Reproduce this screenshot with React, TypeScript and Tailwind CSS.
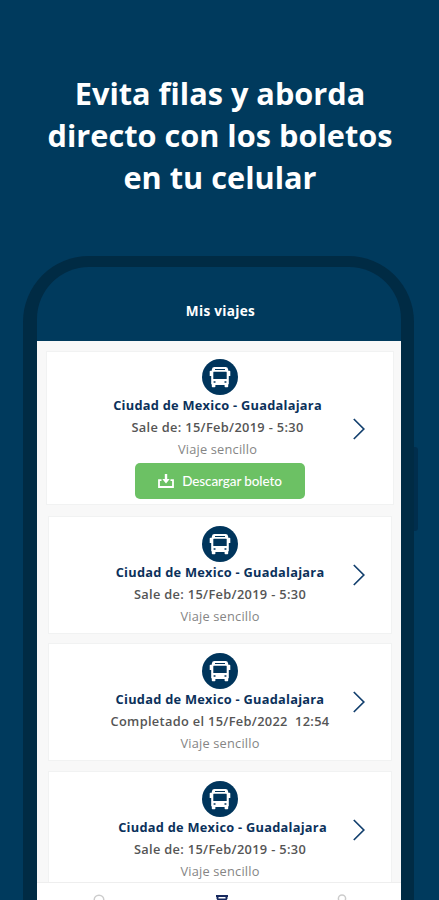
import clsx from 'clsx'

type Trip = {
  route: string
  date: string
  type: string
  download?: boolean
  textClass?: string
  routeClass?: string
}

const trips: Trip[] = [
  {
    route: 'Ciudad de Mexico - Guadalajara',
    date: 'Sale de: 15/Feb/2019 - 5:30',
    type: 'Viaje sencillo',
    download: true,
    textClass: 'pr-[5px]',
  },
  {
    route: 'Ciudad de Mexico - Guadalajara',
    date: 'Sale de: 15/Feb/2019 - 5:30',
    type: 'Viaje sencillo',
  },
  {
    route: 'Ciudad de Mexico - Guadalajara',
    date: 'Completado el 15/Feb/2022  12:54',
    type: 'Viaje sencillo',
  },
  {
    route: 'Ciudad de Mexico - Guadalajara',
    date: 'Sale de: 15/Feb/2019 - 5:30',
    type: 'Viaje sencillo',
    routeClass: 'pl-[5px]',
  },
]

function BusIcon() {
  return (
    <svg viewBox="0 0 36 36" className="block h-9 w-9 shrink-0">
      <circle cx="18" cy="18" r="18" fill="#00355c" />
      <path
        fill="#fff"
        fillRule="evenodd"
        d="M12.500 8h11q2.300 0 2.600 2.200l.2 1.500h1.200q.8 0 .8.800v4.500h-1.500v8.200h-.6v2.300q0 .8-.8.800h-2q-.8 0-.8-.8v-1.600h-9.200v1.600q0 .8-.8.800h-2q-.8 0-.8-.8v-2.300h-.6v-8.200H7.700v-4.500q0-.8.8-.8h1.200l.2-1.500q.3-2.200 2.600-2.200zM13 9.900v1h10v-1zM11.700 12.800q-.4 0-.4.400v6.900h13.400v-6.900q0-.4-.4-.4zM11.600 22.200v1.600h1.900v-1.600zM22.500 22.200v1.600h1.900v-1.600z"
      />
    </svg>
  )
}

function TripCard({ trip }: { trip: Trip }) {
  return (
    <div
      className={clsx(
        'grid shrink-0 grid-cols-[1fr_auto_1fr] items-center border border-[#f1f2f2] bg-white',
        trip.download ? 'mr-[7px] ml-[9px] h-[154px]' : 'mr-[9px] ml-[11px] h-[118px]'
      )}
    >
      <div />
      <div className={clsx('flex flex-col items-center self-start whitespace-pre', trip.download ? 'pt-[7px]' : 'pt-[9px]')}>
        <BusIcon />
        <div className={clsx('flex flex-col items-center', trip.textClass)}>
          <p className={clsx('text-[12.8px] leading-[20px] font-bold tracking-[0.26px] text-[#0b315b]', trip.routeClass)}>{trip.route}</p>
          <p className="text-[12.8px] leading-[24px] font-semibold tracking-[0.33px] text-[#555]">{trip.date}</p>
          <p className="text-[12.8px] leading-[21px] tracking-[0.2px] text-[#858585]">{trip.type}</p>
        </div>
        {trip.download && (
          <button className="mt-[3px] flex h-9 w-[170px] items-center justify-center gap-2 rounded-[5px] bg-[#6cc164] font-['Lato',sans-serif] text-[13.5px] font-medium tracking-[-0.1px] text-white">
            <svg viewBox="0 0 16 14" className="h-[14px] w-4" fill="none" stroke="#fff" strokeWidth="1.800">
              <path d="M3.500 6.200H1V13h14V6.200h-2.500" />
              <path d="M8 0v6" strokeWidth="2.400" />
              <path d="M4.300 5h7.400L8 9.600z" fill="#fff" stroke="none" />
            </svg>
            Descargar boleto
          </button>
        )}
      </div>
      <svg
        viewBox="0 0 12 22"
        className={clsx('h-[22px] w-3 justify-self-end', trip.download ? 'mt-[2px] mr-[28px]' : 'mr-[26px]')}
        fill="none"
        stroke="#123f6d"
        strokeWidth="1.700"
      >
        <path d="M.8 1l10 10-10 10" />
      </svg>
    </div>
  )
}

export default function App() {
  return (
    <main className="flex h-[900px] w-full flex-col items-center overflow-hidden bg-[#003a5d] font-['Open_Sans',sans-serif]">
      <h1 className="h-[256px] shrink-0 pt-[72px] pl-px text-center text-[30.7px] leading-[42px] font-bold whitespace-nowrap text-white">
        Evita filas y aborda
        <br />
        directo con los boletos
        <br />
        en tu celular
      </h1>

      {/* Phone */}
      <div className="relative ml-[23px] flex h-[644px] w-[391px] shrink-0 flex-col self-start rounded-t-[66px] bg-[#002b44] pt-[11px] pr-[13px] pl-[14px]">
        <div className="absolute top-[191px] -right-[4px] h-[84px] w-1 rounded-r-[3px] bg-[#002e4d]" />
        <div className="flex min-h-0 flex-1 flex-col overflow-hidden rounded-t-[52px] bg-[#003a5d]">
          <header className="flex h-[74px] shrink-0 items-center justify-center pt-[15px] pl-[3px] text-[13.6px] font-bold tracking-[0.3px] text-white">
            Mis viajes
          </header>
          <div className="flex min-h-0 flex-1 flex-col gap-[9.5px] overflow-hidden bg-[#f8f8f8] pt-[10px]">
            {trips.map((trip, i) => (
              <div key={i} className={clsx('shrink-0', i === 0 && 'mb-[1.25px]')}>
                <TripCard trip={trip} />
              </div>
            ))}
          </div>
          <nav className="flex h-[18px] shrink-0 overflow-hidden border-t border-[#eee] bg-white">
            <div className="flex flex-1 justify-center pl-[3px]">
              <svg viewBox="0 0 12 16" className="mt-[11px] h-4 w-3 shrink-0" fill="none" stroke="#ccc" strokeWidth="1.500">
                <circle cx="6" cy="6" r="4.800" />
              </svg>
            </div>
            <div className="flex flex-1 justify-center pl-[5px]">
              <svg viewBox="0 0 12 16" className="mt-[12px] h-4 w-3 shrink-0" fill="none" stroke="#16285e" strokeWidth="2">
                <path d="M0 1h12M1.500 1v2.500L3.500 6M10.500 1v2.500L8.500 6M3 4.500h6" />
              </svg>
            </div>
            <div className="flex flex-1 justify-center pl-[3px]">
              <svg viewBox="0 0 12 16" className="mt-[11px] h-4 w-3 shrink-0" fill="none" stroke="#ccc" strokeWidth="1.500">
                <circle cx="6" cy="4.500" r="3.600" />
              </svg>
            </div>
          </nav>
        </div>
      </div>
    </main>
  )
}
